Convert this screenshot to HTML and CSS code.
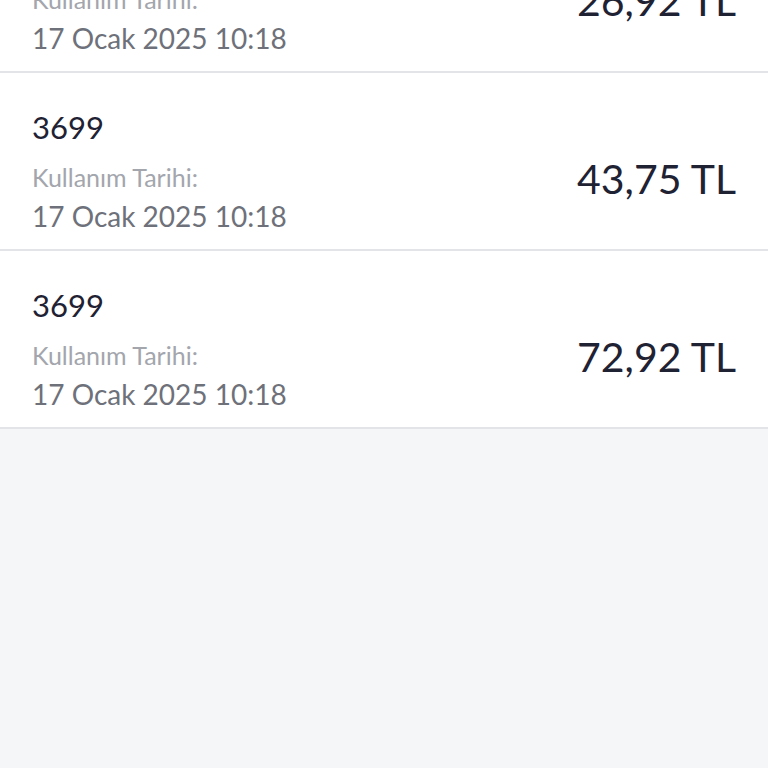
FILE: index.html
```html
<!DOCTYPE html>
<html lang="tr">
<head>
<meta charset="utf-8">
<link rel="stylesheet" href="styles.css">
</head>
<body>
<div class="list">
  <div class="row">
    <div class="info">
      <div class="code">3699</div>
      <div class="label">Kullanım Tarihi:</div>
      <div class="date">17 Ocak 2025 10:18</div>
    </div>
    <div class="amount">26,92 TL</div>
  </div>
  <div class="row">
    <div class="info">
      <div class="code">3699</div>
      <div class="label">Kullanım Tarihi:</div>
      <div class="date">17 Ocak 2025 10:18</div>
    </div>
    <div class="amount">43,75 TL</div>
  </div>
  <div class="row">
    <div class="info">
      <div class="code">3699</div>
      <div class="label">Kullanım Tarihi:</div>
      <div class="date">17 Ocak 2025 10:18</div>
    </div>
    <div class="amount">72,92 TL</div>
  </div>
</div>
</body>
</html>
```
FILE: styles.css
```css
html, body {
  margin: 0;
  padding: 0;
  background: #f5f6f8;
  height: 100%;
  overflow: hidden;
}
body {
  font-family: "Lato", "Open Sans", sans-serif;
}
.list {
  margin-top: -105px;
  display: flex;
  flex-direction: column;
}
.row {
  box-sizing: border-box;
  height: 178px;
  background: #ffffff;
  border-bottom: 2px solid #e3e4e7;
  padding: 34px 32px 0;
  display: flex;
  justify-content: space-between;
  align-items: flex-start;
}
.info {
  display: flex;
  flex-direction: column;
}
.code {
  font-size: 31px;
  line-height: 40px;
  color: #1f2233;
  margin-bottom: 14px;
}
.label {
  font-size: 25px;
  line-height: 32px;
  color: #a3a6ad;
  margin-bottom: 6px;
}
.date {
  font-size: 28px;
  line-height: 34px;
  color: #6e717a;
}
.amount {
  font-size: 41px;
  line-height: 48px;
  color: #1f2233;
  margin-top: 48px;
}
```
